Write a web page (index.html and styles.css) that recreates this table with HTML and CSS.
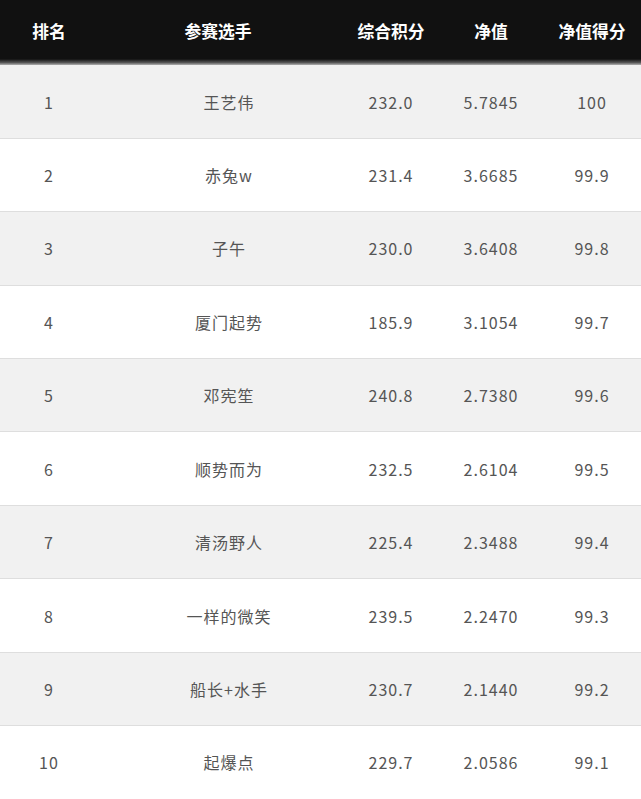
FILE: index.html
```html
<!DOCTYPE html>
<html lang="zh-CN">
<head>
<meta charset="utf-8">
<title>排名</title>
<link rel="stylesheet" href="styles.css">
</head>
<body>
<div class="table">
  <div class="row head">
    <div class="c c1">排名</div><div class="c c2">参赛选手</div><div class="c c3">综合积分</div><div class="c c4">净值</div><div class="c c5">净值得分</div>
  </div>
  <div class="row odd"><div class="c c1">1</div><div class="c c2">王艺伟</div><div class="c c3">232.0</div><div class="c c4">5.7845</div><div class="c c5">100</div></div>
  <div class="row"><div class="c c1">2</div><div class="c c2">赤兔w</div><div class="c c3">231.4</div><div class="c c4">3.6685</div><div class="c c5">99.9</div></div>
  <div class="row odd"><div class="c c1">3</div><div class="c c2">子午</div><div class="c c3">230.0</div><div class="c c4">3.6408</div><div class="c c5">99.8</div></div>
  <div class="row"><div class="c c1">4</div><div class="c c2">厦门起势</div><div class="c c3">185.9</div><div class="c c4">3.1054</div><div class="c c5">99.7</div></div>
  <div class="row odd"><div class="c c1">5</div><div class="c c2">邓宪笙</div><div class="c c3">240.8</div><div class="c c4">2.7380</div><div class="c c5">99.6</div></div>
  <div class="row"><div class="c c1">6</div><div class="c c2">顺势而为</div><div class="c c3">232.5</div><div class="c c4">2.6104</div><div class="c c5">99.5</div></div>
  <div class="row odd"><div class="c c1">7</div><div class="c c2">清汤野人</div><div class="c c3">225.4</div><div class="c c4">2.3488</div><div class="c c5">99.4</div></div>
  <div class="row"><div class="c c1">8</div><div class="c c2">一样的微笑</div><div class="c c3">239.5</div><div class="c c4">2.2470</div><div class="c c5">99.3</div></div>
  <div class="row odd"><div class="c c1">9</div><div class="c c2">船长+水手</div><div class="c c3">230.7</div><div class="c c4">2.1440</div><div class="c c5">99.2</div></div>
  <div class="row"><div class="c c1">10</div><div class="c c2">起爆点</div><div class="c c3">229.7</div><div class="c c4">2.0586</div><div class="c c5">99.1</div></div>
</div>
</body>
</html>
```
FILE: styles.css
```css
html, body {
  margin: 0;
  padding: 0;
  background: #fff;
  overflow: hidden;
}
.table {
  width: 641px;
  font-family: "Noto Sans CJK SC", "Noto Sans", sans-serif;
}
.row {
  display: grid;
  grid-template-columns: 120px 218px 106px 94px 103px;
  height: 73.44px;
  box-sizing: border-box;
  border-bottom: 1px solid #dedede;
  background: #fff;
  color: #555;
  font-size: 16px;
  letter-spacing: 1px;
}
.row.odd {
  background: #f1f1f1;
}
.row.head {
  height: 65.3px;
  border-bottom: none;
  background: linear-gradient(to bottom, #111 0, #111 59px, #555 62.5px, #bbb 65.3px);
  color: #fff;
  font-weight: bold;
  font-size: 16.8px;
  letter-spacing: 0;
  padding-bottom: 3px;
}
.c {
  display: flex;
  align-items: center;
  justify-content: center;
  white-space: nowrap;
}
.c1 { padding-right: 22px; }
.c5 { padding-left: 5px; }
.head .c2 { padding-right: 22px; }
```
